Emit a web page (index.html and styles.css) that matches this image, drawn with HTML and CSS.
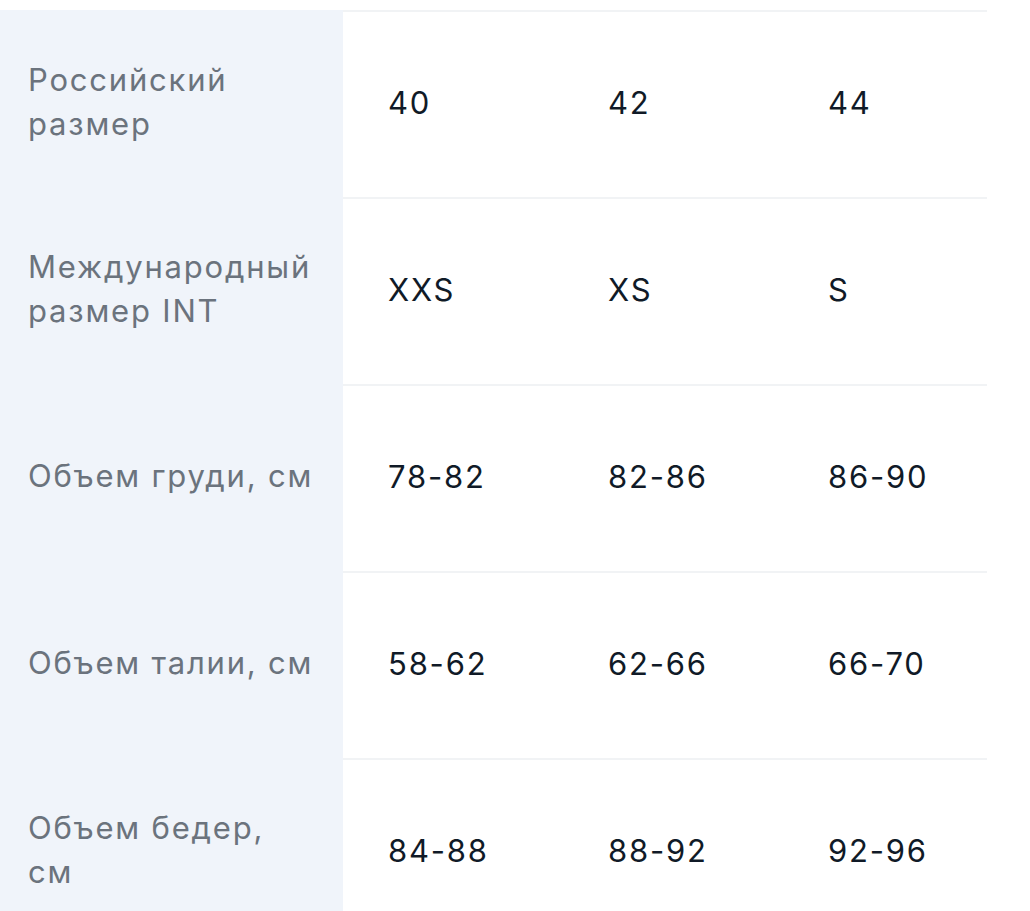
FILE: index.html
```html
<!DOCTYPE html>
<html lang="ru">
<head>
<meta charset="utf-8">
<title>Таблица размеров</title>
<link rel="stylesheet" href="styles.css">
</head>
<body>
<div class="table">
  <div class="row">
    <div class="head">Российский<br>размер</div>
    <div class="cell">40</div>
    <div class="cell">42</div>
    <div class="cell">44</div>
  </div>
  <div class="row">
    <div class="head">Международный<br>размер INT</div>
    <div class="cell">XXS</div>
    <div class="cell">XS</div>
    <div class="cell">S</div>
  </div>
  <div class="row">
    <div class="head">Объем груди, см</div>
    <div class="cell">78-82</div>
    <div class="cell">82-86</div>
    <div class="cell">86-90</div>
  </div>
  <div class="row">
    <div class="head">Объем талии, см</div>
    <div class="cell">58-62</div>
    <div class="cell">62-66</div>
    <div class="cell">66-70</div>
  </div>
  <div class="row">
    <div class="head">Объем бедер,<br>см</div>
    <div class="cell">84-88</div>
    <div class="cell">88-92</div>
    <div class="cell">92-96</div>
  </div>
</div>
</body>
</html>
```
FILE: styles.css
```css
html, body {
  margin: 0;
  padding: 0;
  background: #ffffff;
}
body {
  font-family: Inter, "Noto Sans", "DejaVu Sans", sans-serif;
  overflow: hidden;
}
.table {
  width: 987px;
  margin-top: 10px;
}
.row {
  display: grid;
  grid-template-columns: 343px 220px 220px 1fr;
  height: 187px;
}
.head {
  background: #f0f4fa;
  color: #6b737d;
  font-size: 31px;
  letter-spacing: 1.8px;
  line-height: 44px;
  padding-left: 28px;
  padding-bottom: 3px;
  display: flex;
  align-items: center;
}
.cell {
  border-top: 2px solid #f1f3f5;
  color: #101a27;
  font-size: 31px;
  letter-spacing: 1.8px;
  padding-left: 45px;
  padding-bottom: 4px;
  display: flex;
  align-items: center;
}
```
